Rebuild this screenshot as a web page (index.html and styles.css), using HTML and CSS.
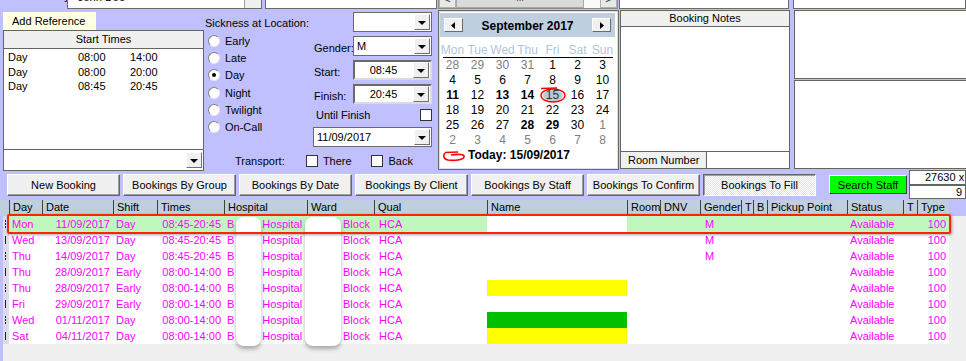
FILE: index.html
```html
<!DOCTYPE html>
<html>
<head>
  <meta charset="UTF-8">
  <title>Bookings</title>
  <link rel="stylesheet" href="styles.css">
</head>
<body>
  <div class="app">
    <div class="topstrip">
      <div class="confirmed-label">Confirmed By:</div>
      <div class="tbox tbox-name"><span>John Doe</span><i class="tbtn"></i></div>
      <div class="tbox tbox-mid"></div>
      <div class="hscroll"><span class="sb-btn">&lt;</span><span class="sb-thumb">III</span><span class="sb-track"></span><span class="sb-btn">&gt;</span></div>
      <div class="tbox tbox-notes"></div>
      <div class="tbox tbox-right"></div>
    </div>

    <div class="main">
      <div class="col-a">
        <div class="addref">Add Reference</div>
        <div class="starttimes">
          <div class="st-head">Start Times</div>
          <div class="st-list">
            <div class="st-row"><span>Day</span><span>08:00</span><span>14:00</span></div>
            <div class="st-row"><span>Day</span><span>08:00</span><span>20:00</span></div>
            <div class="st-row"><span>Day</span><span>08:45</span><span>20:45</span></div>
          </div>
          <div class="st-select"><i class="drop-btn"></i></div>
        </div>
      </div>

      <div class="col-b">
        <div class="sick-row">
          <span class="sick-label">Sickness at Location:</span>
          <div class="select"><span></span><i class="drop-btn"></i></div>
        </div>
        <div class="sick-body">
          <div class="radios">
            <label class="radio"><i class="dot"></i>Early</label>
            <label class="radio"><i class="dot"></i>Late</label>
            <label class="radio"><i class="dot on"></i>Day</label>
            <label class="radio"><i class="dot"></i>Night</label>
            <label class="radio"><i class="dot"></i>Twilight</label>
            <label class="radio"><i class="dot"></i>On-Call</label>
          </div>
          <div class="fields">
            <div class="field-row">
              <span class="field-label">Gender:</span>
              <div class="select"><span>M</span><i class="drop-btn"></i></div>
            </div>
            <div class="field-row">
              <span class="field-label">Start:</span>
              <div class="select sunken"><span class="centered">08:45</span><i class="drop-btn"></i></div>
            </div>
            <div class="field-row">
              <span class="field-label">Finish:</span>
              <div class="select sunken"><span class="centered">20:45</span><i class="drop-btn"></i></div>
            </div>
            <div class="until-row">
              <span>Until Finish</span>
              <i class="check"></i>
            </div>
            <div class="select date-select"><span>11/09/2017</span><i class="drop-btn"></i></div>
          </div>
        </div>
        <div class="transport">
          <span class="transport-label">Transport:</span>
          <label class="checkline"><i class="check"></i>There</label>
          <label class="checkline"><i class="check"></i>Back</label>
        </div>
      </div>

      <div class="calendar">
        <div class="cal-head">
          <span class="cal-nav"><svg width="5" height="7" viewBox="0 0 5 7"><path d="M4 0 L0 3.5 L4 7Z" fill="#000"/></svg></span>
          <span class="cal-title">September 2017</span>
          <span class="cal-nav"><svg width="5" height="7" viewBox="0 0 5 7"><path d="M1 0 L5 3.5 L1 7Z" fill="#000"/></svg></span>
        </div>
        <div class="cal-dow"><span>Mon</span><span>Tue</span><span>Wed</span><span>Thu</span><span>Fri</span><span>Sat</span><span>Sun</span></div>
        <div class="cal-line"></div>
        <div class="cal-days">
          <span class="other">28</span><span class="other">29</span><span class="other">30</span><span class="other">31</span><span>1</span><span>2</span><span>3</span>
          <span>4</span><span>5</span><span>6</span><span>7</span><span>8</span><span>9</span><span>10</span>
          <span class="bold">11</span><span>12</span><span class="bold">13</span><span class="bold">14</span>
          <span class="sel"><svg class="circle" width="28" height="16" viewBox="0 0 28 16"><ellipse cx="14" cy="8.5" rx="10" ry="5.5" fill="#b9c9d9"/><ellipse cx="14" cy="8.5" rx="12" ry="6.5" fill="none" stroke="#f00" stroke-width="1.4"/><path d="M2 1.5 L18 1" stroke="#f00" stroke-width="1.6"/></svg><b>15</b></span>
          <span>16</span><span>17</span>
          <span>18</span><span>19</span><span>20</span><span>21</span><span>22</span><span>23</span><span>24</span>
          <span>25</span><span>26</span><span>27</span><span class="bold">28</span><span class="bold">29</span><span>30</span><span class="other">1</span>
          <span class="other">2</span><span class="other">3</span><span class="other">4</span><span class="other">5</span><span class="other">6</span><span class="other">7</span><span class="other">8</span>
        </div>
        <div class="cal-today">
          <svg class="loop" width="25" height="12" viewBox="0 0 25 12"><path d="M3 2.5 L16 2 M3 3 C1 5 1 9 6 10 C12 11 21 10 22 7 C23 4 16 4 9 5" fill="none" stroke="#f00" stroke-width="1.6"/></svg>
          Today: 15/09/2017
        </div>
      </div>

      <div class="notes">
        <div class="notes-head">Booking Notes</div>
        <div class="notes-body"></div>
        <div class="notes-foot"><span class="room-label">Room Number</span><span class="room-value"></span></div>
      </div>

      <div class="col-e">
        <div class="side-box side-top"></div>
        <div class="side-box side-bottom"></div>
      </div>
    </div>

    <div class="toolbar">
      <button class="btn">New Booking</button>
      <button class="btn">Bookings By Group</button>
      <button class="btn">Bookings By Date</button>
      <button class="btn">Bookings By Client</button>
      <button class="btn">Bookings By Staff</button>
      <button class="btn">Bookings To Confirm</button>
      <button class="btn btn-pressed">Bookings To Fill</button>
      <button class="btn btn-search">Search Staff</button>
      <div class="counters">
        <div class="counter counter-a">27630 x</div>
        <div class="counter counter-b">9</div>
      </div>
    </div>

    <div class="grid">
      <div class="grid-head">
        <span class="gutter"></span>
        <span>Day</span><span>Date</span><span>Shift</span><span>Times</span><span>Hospital</span><span>Ward</span><span>Qual</span><span>Name</span><span>Room</span><span>DNV</span><span>Gender</span><span>T</span><span>B</span><span>Pickup Point</span><span>Status</span><span>T</span><span>Type</span>
      </div>
      <div class="grid-body">
        <div class="row selected">
          <span class="gutter dotted"></span><span>Mon</span><span class="r">11/09/2017</span><span>Day</span><span class="r">08:45-20:45</span><span class="hosp">B<em>Hospital</em></span><span class="ward">Block</span><span class="qual">HCA</span><span class="name blank"></span><span></span><span></span><span class="gen">M</span><span></span><span></span><span></span><span>Available</span><span></span><span class="r">100</span>
        </div>
        <div class="row">
          <span class="gutter"></span><span>Wed</span><span class="r">13/09/2017</span><span>Day</span><span class="r">08:45-20:45</span><span class="hosp">B<em>Hospital</em></span><span class="ward">Block</span><span class="qual">HCA</span><span class="name"></span><span></span><span></span><span class="gen">M</span><span></span><span></span><span></span><span>Available</span><span></span><span class="r">100</span>
        </div>
        <div class="row">
          <span class="gutter dotted"></span><span>Thu</span><span class="r">14/09/2017</span><span>Day</span><span class="r">08:45-20:45</span><span class="hosp">B<em>Hospital</em></span><span class="ward">Block</span><span class="qual">HCA</span><span class="name"></span><span></span><span></span><span class="gen">M</span><span></span><span></span><span></span><span>Available</span><span></span><span class="r">100</span>
        </div>
        <div class="row">
          <span class="gutter"></span><span>Thu</span><span class="r">28/09/2017</span><span>Early</span><span class="r">08:00-14:00</span><span class="hosp">B<em>Hospital</em></span><span class="ward">Block</span><span class="qual">HCA</span><span class="name"></span><span></span><span></span><span></span><span></span><span></span><span></span><span>Available</span><span></span><span class="r">100</span>
        </div>
        <div class="row">
          <span class="gutter dotted"></span><span>Thu</span><span class="r">28/09/2017</span><span>Early</span><span class="r">08:00-14:00</span><span class="hosp">B<em>Hospital</em></span><span class="ward">Block</span><span class="qual">HCA</span><span class="name yellow"></span><span></span><span></span><span></span><span></span><span></span><span></span><span>Available</span><span></span><span class="r">100</span>
        </div>
        <div class="row">
          <span class="gutter"></span><span>Fri</span><span class="r">29/09/2017</span><span>Early</span><span class="r">08:00-14:00</span><span class="hosp">B<em>Hospital</em></span><span class="ward">Block</span><span class="qual">HCA</span><span class="name"></span><span></span><span></span><span></span><span></span><span></span><span></span><span>Available</span><span></span><span class="r">100</span>
        </div>
        <div class="row">
          <span class="gutter dotted"></span><span>Wed</span><span class="r">01/11/2017</span><span>Day</span><span class="r">08:00-14:00</span><span class="hosp">B<em>Hospital</em></span><span class="ward">Block</span><span class="qual">HCA</span><span class="name green"></span><span></span><span></span><span></span><span></span><span></span><span></span><span>Available</span><span></span><span class="r">100</span>
        </div>
        <div class="row">
          <span class="gutter"></span><span>Sat</span><span class="r">04/11/2017</span><span>Day</span><span class="r">08:00-14:00</span><span class="hosp">B<em>Hospital</em></span><span class="ward">Block</span><span class="qual">HCA</span><span class="name yellow"></span><span></span><span></span><span></span><span></span><span></span><span></span><span>Available</span><span></span><span class="r">100</span>
        </div>

        <div class="redact redact-hosp"></div>
        <div class="redact redact-ward"></div>
        <div class="row-mark"></div>
      </div>
    </div>
  </div>
</body>
</html>
```

FILE: styles.css
```css
* {
  box-sizing: border-box;
}
body {
  margin: 0;
  font-family: 'Liberation Sans', Arial, sans-serif;
  font-size: 11px;
  color: #000;
  background-color: #c0c0ff;
}
.app {
  width: 966px;
  height: 361px;
  overflow: hidden;
  background-color: #c0c0ff;
}

/* top strip (cut off by the window) */
.topstrip {
  display: flex;
  align-items: flex-end;
  height: 9px;
  overflow: hidden;
}
.topstrip > * {
  flex: none;
  height: 22px;
}
.confirmed-label {
  width: 67px;
  padding: 3px 0 0 3px;
  white-space: nowrap;
}
.tbox {
  background-color: #fff;
  border: 1px solid #6a6a6a;
}
.tbox-name {
  width: 195px;
  display: flex;
  justify-content: space-between;
  padding: 3px 0 0 10px;
}
.tbtn {
  width: 17px;
  margin-top: -3px;
  background-color: #f0f0f0;
  border-left: 1px solid #a0a0a0;
}
.tbox-mid {
  width: 172px;
  margin-left: 3px;
}
.hscroll {
  width: 180px;
  margin-left: 1px;
  display: flex;
  background-color: #f0f0f0;
  border: 1px solid #8a8a8a;
  color: #444;
}
.sb-btn {
  width: 17px;
  padding-top: 4px;
  text-align: center;
  background-color: #e8e8e8;
  border: 1px solid #b0b0b0;
}
.sb-thumb {
  width: 128px;
  padding-top: 4px;
  text-align: center;
  background-color: #dadada;
  border: 1px solid #a8a8a8;
  font-size: 9px;
}
.sb-track {
  flex: 1;
  background-color: #fbfbfb;
}
.tbox-notes {
  width: 170px;
  margin-left: 1px;
}
.tbox-right {
  width: 173px;
  margin-left: 4px;
}

/* main panel */
.main {
  display: flex;
  align-items: flex-start;
  height: 161px;
}
.col-a {
  width: 201px;
  margin-left: 3px;
  padding-top: 3px;
  flex: none;
}
.addref {
  width: 93px;
  height: 18px;
  line-height: 18px;
  padding-left: 9px;
  background-color: #ffffe4;
}
.starttimes {
  height: 141px;
  display: flex;
  flex-direction: column;
  background-color: #fff;
  border: 1px solid #646464;
}
.st-head {
  height: 18px;
  line-height: 17px;
  text-align: center;
  background-color: #f0f0f0;
  border-bottom: 1px solid #646464;
}
.st-list {
  flex: 1;
  padding: 1px 0 0 4px;
}
.st-row {
  display: grid;
  grid-template-columns: 70px 52px auto;
  line-height: 14.5px;
}
.st-select {
  height: 21px;
  display: flex;
  justify-content: flex-end;
  align-items: center;
  padding-right: 1px;
  border-top: 1px solid #646464;
}

/* dropdowns, radios, checks */
.select {
  width: 79px;
  height: 20px;
  display: flex;
  align-items: center;
  justify-content: space-between;
  padding: 0 1px 0 3px;
  background-color: #fff;
  border: 1px solid #6a6a6a;
}
.select.sunken {
  border-width: 2px;
  border-color: #6a6a6a #dcdcdc #dcdcdc #6a6a6a;
}
.select .centered {
  flex: 1;
  text-align: center;
  padding-right: 4px;
}
.drop-btn {
  width: 16px;
  height: 16px;
  flex: none;
  display: flex;
  align-items: center;
  justify-content: center;
  background-color: #f0f0f0;
  border: 1px solid;
  border-color: #fff #707070 #707070 #fff;
}
.drop-btn::after {
  content: "";
  border-left: 4px solid transparent;
  border-right: 4px solid transparent;
  border-top: 4px solid #000;
  margin-top: 1px;
}
.dot {
  width: 12px;
  height: 12px;
  flex: none;
  border-radius: 50%;
  background-color: #fff;
  border: 1px solid;
  border-color: #808080 #e8e8e8 #e8e8e8 #808080;
  display: flex;
  align-items: center;
  justify-content: center;
}
.dot.on::after {
  content: "";
  width: 4px;
  height: 4px;
  border-radius: 50%;
  background-color: #000;
}
.check {
  width: 12px;
  height: 12px;
  flex: none;
  background-color: #fff;
  border: 1px solid #333;
}

/* sickness / times form */
.col-b {
  width: 232px;
  margin-left: 1px;
  padding-top: 3px;
  flex: none;
}
.sick-row {
  display: flex;
  align-items: center;
  height: 20px;
}
.sick-label {
  width: 148px;
  padding-top: 1px;
}
.sick-body {
  display: flex;
}
.radios {
  width: 108px;
  padding-left: 3px;
}
.radio {
  display: flex;
  align-items: center;
  gap: 5px;
  height: 17.3px;
}
.fields {
  width: 119px;
  padding-top: 4px;
}
.field-row {
  display: flex;
  align-items: center;
  height: 20px;
  margin-bottom: 4px;
}
.field-label {
  width: 40px;
  padding-left: 1px;
  padding-top: 4px;
}
.until-row {
  display: flex;
  justify-content: space-between;
  align-items: center;
  height: 14px;
  margin-top: 2px;
  padding-left: 3px;
}
.date-select {
  width: 119px;
  margin-top: 5px;
}
.transport {
  display: flex;
  align-items: center;
  height: 16px;
  margin-top: 6px;
}
.transport-label {
  width: 110px;
  padding-left: 30px;
}
.checkline {
  display: flex;
  align-items: center;
  gap: 5px;
  width: 74px;
}

/* calendar */
.calendar {
  width: 181px;
  height: 160px;
  margin: 1px 0 0 1px;
  padding: 2px 3px 0 1px;
  flex: none;
  background-color: #fff;
  border: 1px solid #6a6a6a;
  box-shadow: inset 0 0 0 1px #dcdcf4;
}
.cal-head {
  display: flex;
  align-items: center;
  justify-content: space-between;
  height: 24px;
  padding: 0 4px 0 4px;
  background-color: #bfcfdf;
}
.cal-nav {
  width: 19px;
  height: 14px;
  display: flex;
  align-items: center;
  justify-content: center;
  background-color: #f0f0f0;
  border: 1px solid;
  border-color: #fff #6a6a6a #6a6a6a #fff;
}
.cal-title {
  font-size: 12px;
  font-weight: bold;
  padding-top: 2px;
}
.cal-dow,
.cal-days {
  display: grid;
  grid-template-columns: repeat(7, 25px);
  text-align: center;
  font-size: 12px;
}
.cal-dow {
  margin-top: 7px;
  line-height: 13px;
  color: #b2c6da;
}
.cal-line {
  height: 1px;
  margin: 0 2px 0 3px;
  background-color: #000;
}
.cal-days span {
  position: relative;
  line-height: 15px;
}
.cal-days .other {
  color: #808080;
}
.cal-days .bold {
  font-weight: bold;
}
.cal-days .sel b {
  position: relative;
  font-weight: normal;
  color: #333;
}
.circle {
  position: absolute;
  left: -1px;
  top: -1px;
}
.cal-today {
  position: relative;
  line-height: 15px;
  padding-left: 28px;
  font-size: 12px;
  font-weight: bold;
}
.loop {
  position: absolute;
  left: 2px;
  top: 2px;
}

/* booking notes */
.notes {
  width: 170px;
  height: 159px;
  margin: 1px 0 0 1px;
  flex: none;
  display: flex;
  flex-direction: column;
  background-color: #fff;
  border: 1px solid #646464;
}
.notes-head {
  height: 16px;
  line-height: 15px;
  text-align: center;
  background-color: #f0f0f0;
  border-bottom: 1px solid #646464;
}
.notes-body {
  flex: 1;
}
.notes-foot {
  display: flex;
  height: 17px;
  border-top: 1px solid #646464;
}
.room-label {
  width: 86px;
  padding-left: 7px;
  line-height: 16px;
  background-color: #f0f0f0;
  border-right: 1px solid #646464;
}
.col-e {
  width: 173px;
  margin: 1px 0 0 4px;
  flex: none;
}
.side-box {
  background-color: #fff;
  border: 1px solid #646464;
}
.side-top {
  height: 69px;
}
.side-bottom {
  height: 89px;
  margin-top: 1px;
}

/* toolbar */
.toolbar {
  display: flex;
  align-items: flex-start;
  gap: 3px;
  height: 29px;
  padding-left: 7px;
}
.btn {
  width: 113px;
  height: 22px;
  margin-top: 4px;
  padding: 0;
  font-family: inherit;
  font-size: 11px;
  color: #000;
  background-color: #f0f0f0;
  border: 1px solid;
  border-color: #fff #646464 #646464 #fff;
  box-shadow: inset -1px -1px #a0a0a0;
}
.btn-pressed {
  border-color: #646464 #fff #fff #646464;
  box-shadow: inset 1px 1px #a0a0a0;
  background: repeating-conic-gradient(#fff 0 25%, #e2e2e2 0 50%) 0 0 / 2px 2px;
}
.btn-search {
  width: 78px;
  height: 19px;
  margin: 5px 0 0 10px;
  background-color: #00ff00;
  border-color: #fff #404040 #404040 #fff;
  box-shadow: none;
}
.counters {
  width: 57px;
  margin-left: -1px;
}
.counter {
  background-color: #fff;
  border: 1px solid #646464;
  white-space: nowrap;
  overflow: hidden;
}
.counter-a {
  height: 15px;
  line-height: 12px;
  padding-left: 15px;
}
.counter-b {
  height: 14px;
  line-height: 12px;
  text-align: right;
  padding-right: 3px;
}

/* bookings grid */
.grid {
  margin-top: 1px;
}
.grid-head,
.row {
  display: grid;
}
.grid-head {
  width: 949px;
  height: 16px;
  line-height: 15px;
  grid-template-columns: 9px 33px 71px 44px 67px 83px 67px 113px 140px 33px 40px 41px 12px 14px 80px 56px 14px 32px;
  background-color: #bfcfdf;
}
.grid-head span {
  padding-left: 3px;
  white-space: nowrap;
  overflow: hidden;
  border-left: 1px solid #404040;
}
.grid-head .gutter {
  border-left: none;
}
.grid-body {
  position: relative;
  height: 146px;
  margin-left: 3px;
  background-color: #f0f0f0;
}
.row {
  width: 946px;
  height: 16px;
  line-height: 16px;
  grid-template-columns: 6px 33px 71px 44px 67px 83px 67px 113px 140px 33px 40px 41px 12px 14px 80px 56px 14px 32px;
  color: #ff00ff;
  background-color: #fff;
}
.row span {
  padding: 0 3px;
  white-space: nowrap;
  overflow: hidden;
}
.row .r {
  text-align: right;
}
.row .gutter {
  padding: 0;
  position: relative;
  background-color: #dcdcec;
}
.row .gutter::after {
  content: "";
  position: absolute;
  left: 2px;
  top: 4px;
  width: 1px;
  height: 8px;
  background-color: #222;
}
.row .gutter.dotted::after {
  background: repeating-linear-gradient(#222 0 2px, transparent 2px 3px);
}
.row .hosp em {
  font-style: normal;
  margin-left: 28px;
}
.row .ward {
  padding-left: 36px;
}
.row .qual {
  padding-left: 5px;
}
.row .gen {
  padding-left: 5px;
}
.row.selected {
  background-color: #bff7bf;
}
.name.blank {
  background-color: #fff;
}
.name.yellow {
  background-color: #ffff00;
}
.name.green {
  background-color: #00c000;
}
.row-mark {
  position: absolute;
  left: 4px;
  top: -2px;
  width: 944px;
  height: 20px;
  border: 2px solid #ff2400;
  border-radius: 2px;
  box-shadow: 1px 1px 3px rgba(0, 0, 0, 0.35);
}
.redact {
  position: absolute;
  top: 1px;
  height: 129px;
  background-color: #fff;
  border-radius: 8px;
  box-shadow: 0 3px 4px rgba(0, 0, 0, 0.3);
}
.redact-hosp {
  left: 233px;
  width: 25px;
}
.redact-ward {
  left: 302px;
  width: 36px;
}
```
